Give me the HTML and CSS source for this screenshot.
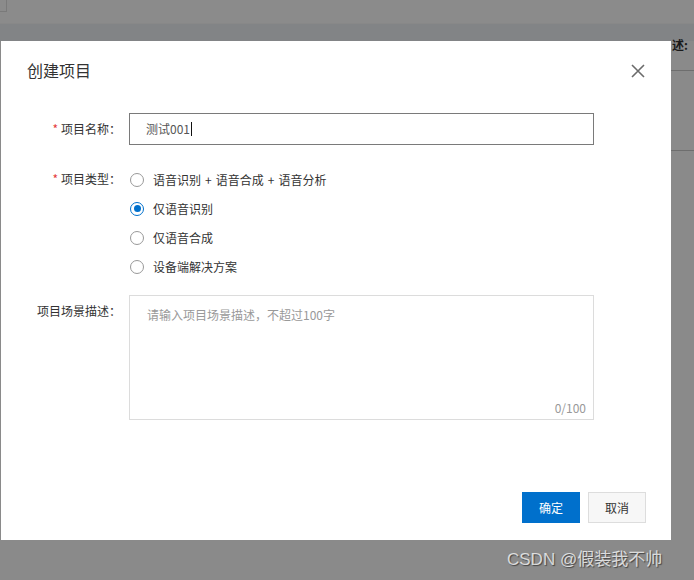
FILE: index.html
```html
<!DOCTYPE html>
<html lang="zh">
<head>
<meta charset="utf-8">
<link rel="stylesheet" href="styles.css">
</head>
<body>
<div class="page">
  <div class="topbar"><span class="corner"></span></div>
  <div class="band"><span class="band-text">述:</span></div>
  <div class="rest">
    <div class="rline rline1"></div>
    <div class="rline rline2"></div>
  </div>
</div>

<div class="modal">
  <div class="modal-header">
    <h2 class="modal-title">创建项目</h2>
    <svg class="close" width="14" height="14" viewBox="0 0 14 14"><path d="M1 1 L13 13 M13 1 L1 13" stroke="#6b6b6b" stroke-width="1.6" fill="none"/></svg>
  </div>
  <div class="modal-body">
    <div class="row row-name">
      <div class="label"><span class="req">*</span>项目名称：</div>
      <div class="control">
        <div class="input">测试001<span class="caret"></span></div>
      </div>
    </div>
    <div class="row row-type">
      <div class="label label-type"><span class="req">*</span>项目类型：</div>
      <div class="control radios">
        <div class="radio"><span class="dot"></span>语音识别<span class="plus">+</span>语音合成<span class="plus">+</span>语音分析</div>
        <div class="radio checked"><span class="dot"></span>仅语音识别</div>
        <div class="radio"><span class="dot"></span>仅语音合成</div>
        <div class="radio"><span class="dot"></span>设备端解决方案</div>
      </div>
    </div>
    <div class="row row-desc">
      <div class="label label-desc">项目场景描述：</div>
      <div class="control">
        <div class="textarea">
          <span class="placeholder">请输入项目场景描述，不超过100字</span>
          <span class="count">0/100</span>
        </div>
      </div>
    </div>
  </div>
  <div class="modal-footer">
    <button class="btn btn-primary">确定</button>
    <button class="btn btn-default">取消</button>
  </div>
</div>

<div class="watermark">CSDN @假装我不帅</div>
</body>
</html>
```

FILE: styles.css
```css
* { box-sizing: border-box; }
html, body { margin: 0; padding: 0; }
body {
  width: 694px;
  height: 580px;
  overflow: hidden;
  background: #8a8a8a;
  font-family: "Noto Sans CJK SC", "Liberation Sans", sans-serif;
  font-size: 12px;
  color: #333;
  position: relative;
}
.page { height: 580px; display: flex; flex-direction: column; }
.topbar { height: 23px; background: #8b8b8b; position: relative; }
.corner {
  position: absolute; left: -1px; top: -1px;
  width: 8px; height: 13px;
  border: 1px solid #7a7a7a;
}
.band {
  height: 18px;
  background: #828486;
  border-top: 1px solid #888;
  position: relative;
}
.band-text {
  position: absolute; left: 672px; top: 14px;
  font-size: 12px; font-weight: bold; color: #1a1a1a;
  line-height: 14px;
  z-index: 2;
}
.rest { flex: 1; background: #8a8a8a; position: relative; }
.rline { position: absolute; left: 671px; right: 0; height: 1px; background: #6e6e6e; }
.rline1 { top: 29px; }
.rline2 { top: 109px; }

.modal {
  position: absolute;
  left: 1px; top: 41px;
  width: 670px; height: 499px;
  background: #fff;
  display: flex;
  flex-direction: column;
  z-index: 1;
}
.modal-header {
  display: flex;
  justify-content: space-between;
  align-items: center;
  padding: 17px 26px 0 26px;
  height: 41px;
}
.modal-title {
  margin: 0;
  font-size: 16px;
  font-weight: normal;
  line-height: 24px;
  color: #333;
}
.close { margin-top: 1px; }

.modal-body {
  padding-top: 31px;
  flex: 1;
}
.row { display: flex; }
.label {
  width: 120px;
  text-align: right;
  color: #333;
  line-height: 32px;
  margin-right: 8px;
  white-space: nowrap;
}
.req { color: #e4393c; margin-right: 3px; font-size: 12px; }
.control { width: 465px; }
.input {
  height: 32px;
  border: 1px solid #7a7a7a;
  padding-left: 16px;
  line-height: 30px;
  color: #555;
  display: flex;
  align-items: center;
}
.caret {
  display: inline-block;
  width: 1px; height: 14px;
  background: #111;
  margin-left: 1px;
}
.row-type { margin-top: 20px; }
.label-type { line-height: 27px; }
.radios { display: flex; flex-direction: column; }
.radio {
  height: 29px;
  display: flex;
  align-items: center;
  color: #333;
}
.plus { padding: 0 4px; }
.dot {
  width: 14px; height: 14px;
  border: 1px solid #999;
  border-radius: 50%;
  margin-left: 1px;
  margin-right: 9px;
  display: flex;
  align-items: center;
  justify-content: center;
  flex-shrink: 0;
}
.checked .dot { border: 1.5px solid #0070cc; }
.checked .dot::after {
  content: "";
  width: 7px; height: 7px;
  background: #0070cc;
  border-radius: 50%;
}
.row-desc { margin-top: 14px; }
.label-desc { line-height: 20px; padding-top: 6px; }
.textarea {
  height: 125px;
  border: 1px solid #dcdcdc;
  position: relative;
  padding: 9px 0 0 17px;
  line-height: 20px;
}
.placeholder { color: #999; }
.count {
  position: absolute;
  right: 7px; bottom: 3px;
  color: #999;
  line-height: 16px;
}

.modal-footer {
  display: flex;
  justify-content: flex-end;
  gap: 8px;
  padding: 0 25px 17px 0;
}
.btn {
  width: 58px; height: 31px;
  font-family: "Noto Sans CJK SC", "Liberation Sans", sans-serif;
  font-size: 12px;
  padding: 0;
  cursor: pointer;
}
.btn-primary { background: #0070cc; color: #fff; border: 1px solid #0070cc; }
.btn-default { background: #f7f7f7; color: #333; border: 1px solid #ddd; }

.watermark {
  position: absolute;
  left: 507px; top: 549px;
  font-family: "Liberation Sans", "Noto Sans CJK SC", sans-serif;
  font-size: 17px;
  line-height: 22px;
  color: rgba(255,255,255,0.75);
  text-shadow: 1px 1px 1px rgba(0,0,0,0.5);
  white-space: nowrap;
  z-index: 2;
}
```
